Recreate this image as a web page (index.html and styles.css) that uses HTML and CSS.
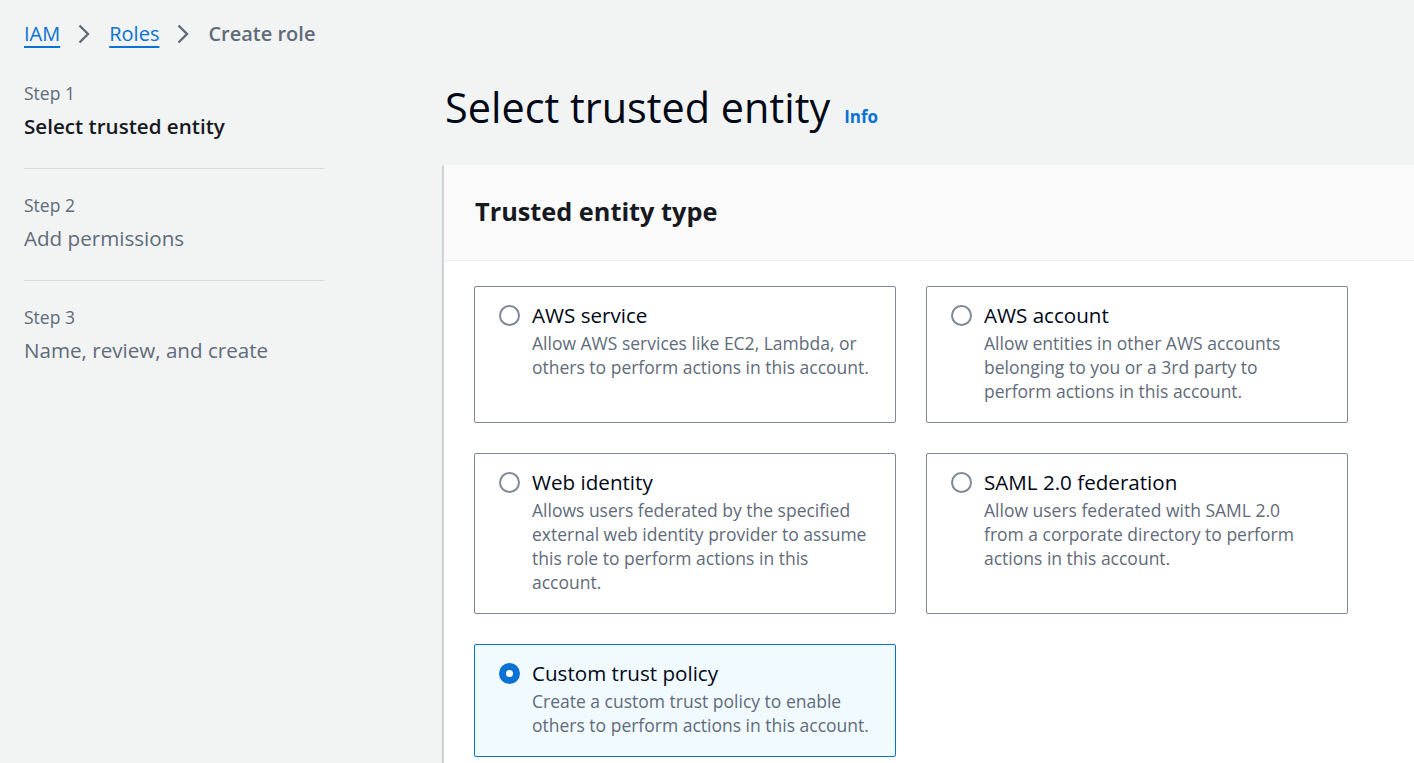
FILE: index.html
```html
<!DOCTYPE html>
<html lang="en">
<head>
<meta charset="utf-8">
<title>Create role</title>
<link rel="stylesheet" href="styles.css">
</head>
<body>
<nav class="breadcrumbs">
  <a class="crumb-link" href="#">IAM</a>
  <svg class="chev" viewBox="0 0 14 22" width="14" height="22"><path d="M2.5 2.5l8.5 8.5-8.5 8.5" fill="none" stroke="currentColor" stroke-width="2.4"/></svg>
  <a class="crumb-link" href="#">Roles</a>
  <svg class="chev" viewBox="0 0 14 22" width="14" height="22"><path d="M2.5 2.5l8.5 8.5-8.5 8.5" fill="none" stroke="currentColor" stroke-width="2.4"/></svg>
  <span class="crumb-current">Create role</span>
</nav>
<div class="layout">
  <aside class="steps">
    <div class="step">
      <div class="step-num">Step 1</div>
      <div class="step-title active">Select trusted entity</div>
    </div>
    <div class="step">
      <div class="step-num">Step 2</div>
      <div class="step-title">Add permissions</div>
    </div>
    <div class="step">
      <div class="step-num">Step 3</div>
      <div class="step-title">Name, review, and create</div>
    </div>
  </aside>
  <main class="main">
    <header class="page-header">
      <h1 class="page-title">Select trusted entity</h1>
      <a class="info" href="#">Info</a>
    </header>
    <section class="panel">
      <div class="panel-header">
        <h2 class="panel-title">Trusted entity type</h2>
      </div>
      <div class="panel-body">
        <div class="tiles">
          <label class="tile">
            <span class="radio"></span>
            <span class="tile-text">
              <span class="tile-title">AWS service</span>
              <span class="tile-desc">Allow AWS services like EC2, Lambda, or others to perform actions in this account.</span>
            </span>
          </label>
          <label class="tile">
            <span class="radio"></span>
            <span class="tile-text">
              <span class="tile-title">AWS account</span>
              <span class="tile-desc">Allow entities in other AWS accounts belonging to you or a 3rd party to perform actions in this account.</span>
            </span>
          </label>
          <label class="tile">
            <span class="radio"></span>
            <span class="tile-text">
              <span class="tile-title">Web identity</span>
              <span class="tile-desc">Allows users federated by the specified external web identity provider to assume this role to perform actions in this account.</span>
            </span>
          </label>
          <label class="tile">
            <span class="radio"></span>
            <span class="tile-text">
              <span class="tile-title">SAML 2.0 federation</span>
              <span class="tile-desc">Allow users federated with SAML 2.0 from a corporate directory to perform actions in this account.</span>
            </span>
          </label>
          <label class="tile selected">
            <span class="radio checked"></span>
            <span class="tile-text">
              <span class="tile-title">Custom trust policy</span>
              <span class="tile-desc">Create a custom trust policy to enable others to perform actions in this account.</span>
            </span>
          </label>
        </div>
      </div>
    </section>
  </main>
</div>
</body>
</html>
```

FILE: styles.css
```css
* { box-sizing: border-box; }

html, body {
  margin: 0;
  padding: 0;
  height: 100%;
}

body {
  background: #f2f3f3;
  font-family: "Open Sans", "Noto Sans", "Liberation Sans", sans-serif;
  color: #16191f;
  overflow: hidden;
}

.breadcrumbs {
  display: flex;
  align-items: center;
  padding: 20px 24px 0 24px;
  height: 48px;
  font-size: 20px;
  line-height: 28px;
}

.crumb-link {
  color: #0972d3;
  text-decoration: underline;
  text-underline-offset: 5px;
  text-decoration-thickness: 2px;
}

.chev {
  color: #5f6b7a;
  margin: 0 18px 0 17px;
  flex: none;
}

.crumb-current {
  color: #5f6b7a;
  font-weight: 600;
}

.layout {
  display: flex;
  margin-top: 33px;
}

.steps {
  width: 300px;
  margin-left: 24px;
  flex: none;
}

.step {
  padding: 0 0 28px 0;
  border-bottom: 1px solid #d5dbdb;
  margin-bottom: 24px;
}

.step:last-child {
  border-bottom: none;
}

.step-num {
  font-size: 17.5px;
  line-height: 24px;
  color: #5f6b7a;
}

.step-title {
  margin-top: 7px;
  font-size: 20.6px;
  line-height: 28px;
  color: #5f6b7a;
}

.step-title.active {
  color: #16191f;
  font-weight: 600;
}

.main {
  margin-left: 119px;
  flex: none;
  width: 1000px;
}

.page-header {
  display: flex;
  align-items: baseline;
  gap: 14px;
  padding-left: 2px;
  height: 52px;
}

.page-title {
  margin: 0;
  font-size: 41.4px;
  line-height: 52px;
  font-weight: 400;
  color: #000716;
}

.info {
  color: #0972d3;
  font-weight: 700;
  font-size: 17px;
  text-decoration: none;
}

.panel {
  margin-top: 32px;
  background: #ffffff;
  border-left: 1px solid #d1d5db;
  box-shadow: 0 1px 1px 0 rgba(0, 28, 36, 0.3), -1px 1px 1px 0 rgba(0, 28, 36, 0.1);
  min-height: 700px;
}

.panel-header {
  background: #fafafa;
  border-bottom: 1px solid #eaeded;
  height: 96px;
  display: flex;
  align-items: center;
  padding-left: 31px;
  padding-bottom: 4px;
}

.panel-title {
  margin: 0;
  font-size: 25.3px;
  line-height: 32px;
  font-weight: 700;
  color: #16191f;
}

.panel-body {
  padding: 25px 30px 30px 30px;
}

.tiles {
  display: grid;
  grid-template-columns: 422px 422px;
  column-gap: 30px;
  row-gap: 30px;
}

.tile {
  display: flex;
  align-items: flex-start;
  gap: 12px;
  border: 1px solid #7d8998;
  border-radius: 2px;
  padding: 14px 25px 19px 24px;
  background: #ffffff;
  cursor: pointer;
}

.tile.selected {
  border-color: #0972d3;
  background: #f1faff;
}

.radio {
  flex: none;
  width: 21px;
  height: 21px;
  margin-top: 4px;
  border: 2px solid #7d8998;
  border-radius: 50%;
  background: #ffffff;
}

.radio.checked {
  border: 7px solid #0972d3;
}

.tile-text {
  display: flex;
  flex-direction: column;
}

.tile-title {
  font-size: 20.6px;
  line-height: 28px;
  color: #000716;
}

.tile-desc {
  margin-top: 2px;
  font-size: 17.5px;
  line-height: 24px;
  color: #5f6b7a;
}
```
